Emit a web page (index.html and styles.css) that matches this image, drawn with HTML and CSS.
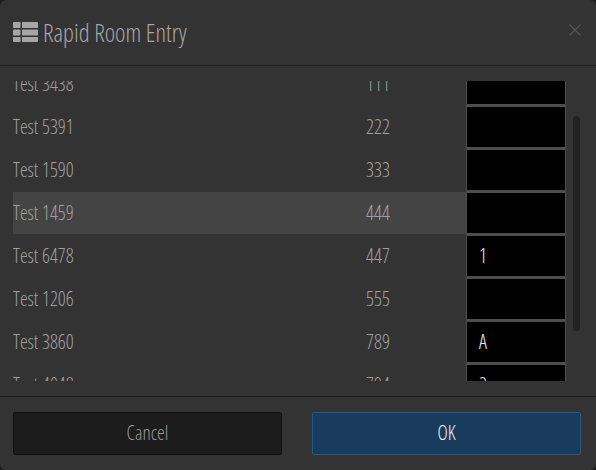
FILE: index.html
```html
<!DOCTYPE html>
<html lang="en">
<head>
<meta charset="utf-8">
<title>Rapid Room Entry</title>
<link rel="stylesheet" href="styles.css">
</head>
<body>
<div class="modal">
  <header class="head">
    <svg class="head-icon" viewBox="0 0 25 20" width="25" height="20" aria-hidden="true">
      <path d="M0 1A1 1 0 0 1 1 0H7.500V6H0ZM9 0H24A1 1 0 0 1 25 1V6H9ZM0 7.500H7.500V13.500H0ZM9 7.500H25V13.500H9ZM0 15H7.500V20H1A1 1 0 0 1 0 19ZM9 15H25V19A1 1 0 0 1 24 20H9Z" fill="#a6a6a6"/>
    </svg>
    <h1 class="title">Rapid Room Entry</h1>
    <svg class="close" viewBox="0 0 12 12" width="12" height="12" aria-hidden="true">
      <path d="M0.500 0.500L11.500 11.500M11.500 0.500L0.500 11.500" stroke="#555" stroke-width="1.100" fill="none"/>
    </svg>
  </header>
  <main class="body">
    <div class="viewport">
      <div class="rows">
        <div class="row"><span class="name">Test 3438</span><span class="num">111</span><span class="field"></span></div>
        <div class="row"><span class="name">Test 5391</span><span class="num">222</span><span class="field"></span></div>
        <div class="row"><span class="name">Test 1590</span><span class="num">333</span><span class="field"></span></div>
        <div class="row hot"><span class="name">Test 1459</span><span class="num">444</span><span class="field"></span></div>
        <div class="row"><span class="name">Test 6478</span><span class="num">447</span><span class="field">1</span></div>
        <div class="row"><span class="name">Test 1206</span><span class="num">555</span><span class="field"></span></div>
        <div class="row"><span class="name">Test 3860</span><span class="num">789</span><span class="field">A</span></div>
        <div class="row"><span class="name">Test 4048</span><span class="num">794</span><span class="field">2</span></div>
      </div>
    </div>
    <div class="thumb"></div>
  </main>
  <footer class="foot">
    <button class="btn cancel">Cancel</button>
    <button class="btn ok">OK</button>
  </footer>
</div>
</body>
</html>
```
FILE: styles.css
```css
* { box-sizing: border-box; }
html, body { margin: 0; height: 100%; background: #1c1c1c; }
body { font-family: "Open Sans", "Liberation Sans", sans-serif; font-stretch: 75%; font-weight: 300; }
.modal { width: 596px; height: 470px; background: #333; border-radius: 6px; display: flex; flex-direction: column; overflow: hidden; }
.head { height: 66px; flex: none; border-bottom: 1px solid #1e1e1e; display: flex; align-items: center; padding: 0 15px 0 13px; gap: 5px; }
.head-icon { flex: none; margin-top: -1px; }
.title { margin: 0; font-size: 24.800px; font-weight: 300; color: #a6a6a6; flex: 1; line-height: 30px; margin-top: -1px; }
.close { flex: none; margin-top: -5px; }
.body { position: relative; flex: 1; padding: 15px 30px 15px 13px; min-height: 0; }
.viewport { height: 300px; overflow: hidden; }
.rows { margin-top: -18px; }
.row { height: 43px; display: flex; align-items: center; font-size: 19.500px; color: #a0a0a0; }
.name, .num { padding-bottom: 2px; }
.hot { background: linear-gradient(#444 42px, transparent 42px); }
.name { width: 353px; }
.num { width: 100px; }
.field { width: 100px; height: 43px; flex: none; background: #000; border: 1px solid #4d4d4d; border-bottom-width: 2px; color: #eee; display: flex; align-items: center; padding: 0 0 2px 12px; }
.thumb { position: absolute; left: 573px; top: 50px; width: 7px; height: 215px; background: #222; border-radius: 4px; }
.foot { height: 74px; flex: none; border-top: 1px solid #1e1e1e; display: flex; justify-content: space-between; padding: 15px 15px 15px 13px; }
.btn { height: 43px; font: inherit; font-size: 19.500px; border-radius: 2px; padding: 0 0 2px; }
.cancel { width: 269px; background: #1c1c1c; border: 1px solid #111; color: #999; }
.ok { width: 269px; background: #1a3c5c; border: 1px solid #245a87; color: #eee; }
```
